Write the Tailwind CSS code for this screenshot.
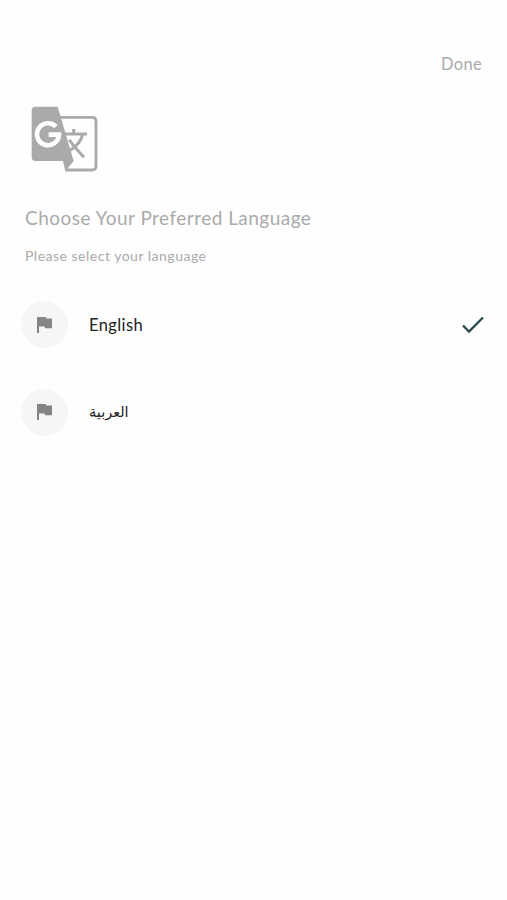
<!DOCTYPE html>
<html lang="en">
<head>
<meta charset="utf-8">
<meta name="viewport" content="width=device-width, initial-scale=1">
<title>Choose Your Preferred Language</title>
<script src="https://cdn.jsdelivr.net/npm/@tailwindcss/browser@4"></script>
</head>
<body class="bg-white">
<main class="flex h-[900px] w-[507px] flex-col overflow-hidden bg-[#fefefe] font-['Lato','Noto_Sans',sans-serif]">
  <header class="flex justify-end pt-[52px] pr-[25px]">
    <button class="text-[16.5px] leading-6 tracking-[0.3px] text-[#aaaaaa]">Done</button>
  </header>
  <svg class="mt-[29px] ml-[30px] h-[68px] w-[70px]" viewBox="31 30 210 204" fill="none" aria-hidden="true">
    <path d="M118 67H217Q229 67 229 79V213Q229 225 217 225H137" stroke="#aaa" stroke-width="8.5"/>
    <path d="M48 35H114L162 198L137 228L130 198H48Q36 198 36 186V47Q36 35 48 35Z" fill="#aaa"/>
    <path d="M109 95A33 33 0 1 0 118 119H87" stroke="#fefefe" stroke-width="14"/>
    <path d="M136 117H202M162 102V117M189 118C184 139 170 155 151 166M149 134C157 149 174 166 193 187" stroke="#aaa" stroke-width="9"/>
  </svg>
  <h1 class="mt-[33px] ml-[25px] text-[19px] leading-6 tracking-[0.47px] whitespace-nowrap text-[#aaaaaa]">Choose Your Preferred Language</h1>
  <p class="mt-4 ml-[25px] text-[14px] leading-5 tracking-[0.5px] whitespace-nowrap text-[#aaaaaa]">Please select your language</p>
  <ul class="mt-[34.5px] flex flex-col gap-[39.5px] pr-[23px] pl-[20.5px]">
    <li class="flex h-12 items-center">
      <span class="flex size-[47px] items-center justify-center rounded-full bg-[#f6f6f6]">
        <svg class="h-4 w-[15px]" viewBox="0 0 15 16" fill="#858585" aria-hidden="true"><path d="M0 0H8.6L9.3 1.6H15V11.2H8.2L7.5 9.5H2V16H0Z"/></svg>
      </span>
      <span class="ml-[21.5px] flex-1 text-[16.5px] leading-6 tracking-[0.4px] text-[#222222]">English</span>
      <svg class="h-[18px] w-[22px]" viewBox="0 0 22 18" fill="none" stroke="#2b4848" stroke-width="2.3" aria-hidden="true"><path d="M1 9.5L7 15.5L21 1.5"/></svg>
    </li>
    <li class="flex h-12 items-center">
      <span class="flex size-[47px] items-center justify-center rounded-full bg-[#f6f6f6]">
        <svg class="h-4 w-[15px]" viewBox="0 0 15 16" fill="#858585" aria-hidden="true"><path d="M0 0H8.6L9.3 1.6H15V11.2H8.2L7.5 9.5H2V16H0Z"/></svg>
      </span>
      <span lang="ar" dir="rtl" class="mb-px ml-[21.5px] font-['DejaVu_Sans',sans-serif] text-[14.5px] leading-6 text-[#222222]">العربية</span>
    </li>
  </ul>
</main>
</body>
</html>
